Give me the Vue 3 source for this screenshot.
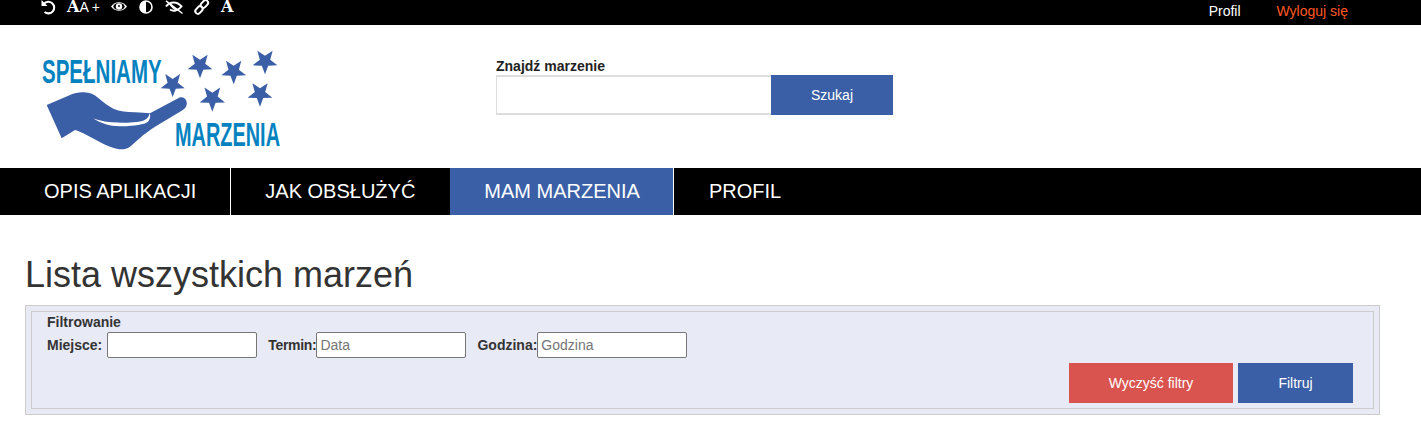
<script setup>
const menu = [
  { label: 'OPIS APLIKACJI' },
  { label: 'JAK OBSŁUŻYĆ' },
  { label: 'MAM MARZENIA', active: true },
  { label: 'PROFIL' },
]

const stars = [
  [458, 133, 38],
  [540, 76, 39],
  [641, 94, 39],
  [735, 64, 39],
  [577, 175, 40],
  [720, 161, 39],
]

function starPoints(cx, cy, r) {
  const pts = []
  for (let i = 0; i < 10; i++) {
    const radius = i % 2 === 0 ? r : r * 0.42
    const angle = Math.PI / 2 + (i * Math.PI) / 5
    pts.push(`${(cx + radius * Math.cos(angle)).toFixed(1)},${(cy + radius * Math.sin(angle)).toFixed(1)}`)
  }
  return pts.join(' ')
}
</script>

<template>
  <div class="page">
    <div class="topbar">
      <div class="tools">
        <svg class="ico" width="14" height="14" viewBox="0 0 14 14" fill="none" stroke="#fff" stroke-width="2.1">
          <path d="M3 3.8 A5.8 5.8 0 1 1 3.6 12" />
          <path d="M.5 0 L.5 6 L6.5 6 Z" fill="#fff" stroke="none" />
        </svg>
        <span class="sizes"><b class="serif">A</b><span class="thin">A</span><span class="plus">+</span></span>
        <svg class="ico" width="16" height="14" viewBox="0 0 17 14">
          <path d="M0 6.5 C4 .5 13 .5 17 6.5 C13 12.5 4 12.5 0 6.5 Z" fill="#fff" />
          <ellipse cx="8.5" cy="6.5" rx="6" ry="3.8" fill="#000" />
          <circle cx="8.5" cy="6.5" r="3.4" fill="#fff" />
          <circle cx="8.5" cy="6" r="1" fill="#000" />
        </svg>
        <svg class="ico" width="14" height="14" viewBox="0 0 14 14">
          <circle cx="7" cy="7" r="6" fill="#000" stroke="#fff" stroke-width="1.6" />
          <path d="M7 1 A6 6 0 0 0 7 13 Z" fill="#fff" />
        </svg>
        <svg class="ico" width="18" height="14" viewBox="0 0 18 14" fill="none" stroke="#fff">
          <path d="M1 6.5 C5 1 12 1 16.5 6.5 C13 11 8 11.5 5 9.5" stroke-width="2" />
          <path d="M5 4 C7 6 9 9 11.5 9.5" stroke-width="2.2" />
          <path d="M1 .8 L17.5 13.5" stroke-width="1.5" />
        </svg>
        <svg class="ico link" width="14" height="14" viewBox="0 0 14 14" fill="none" stroke="#fff" stroke-width="2">
          <rect x="6.8" y="-.2" width="5.2" height="8.4" rx="2.6" transform="rotate(42 9.4 4)" />
          <rect x="1.4" y="5.8" width="5.2" height="8.4" rx="2.6" transform="rotate(42 4 10)" />
        </svg>
        <b class="serif">A</b>
      </div>
      <div class="account">
        <a class="profile">Profil</a>
        <a class="logout">Wyloguj się</a>
      </div>
    </div>

    <header class="header">
      <svg class="logo" width="280" height="120" viewBox="0 0 840 360">
        <polygon v-for="(s, i) in stars" :key="i" :points="starPoints(s[0], s[1], s[2])" fill="#3b5fa6" />
        <path
          d="M80 195 L145 167 C165 158 180 156 192 157 C210 158 222 163 235 174 C250 187 262 197 280 206 C300 214 320 216 345 217 C362 218 378 219 390 220 L480 172 C490 170 498 176 500 186 C502 200 494 208 480 215 L405 260 C390 270 380 277 370 285 L330 320 C318 328 305 329 290 326 C275 322 262 318 245 309 L190 280 C180 275 172 272 165 270 L125 295 Z"
          fill="#3b5fa6"
        />
        <path
          d="M220 235 C240 243 262 248 310 248 C340 248 362 246 374 240 C384 235 388 228 388 220 C392 226 392 236 384 245 C372 254 345 257 305 259 C270 260 240 249 220 235 Z"
          fill="#fff"
        />
        <text x="66" y="130" class="logo-text" textLength="359" lengthAdjust="spacingAndGlyphs">SPEŁNIAMY</text>
        <text x="465" y="318" class="logo-text" textLength="315" lengthAdjust="spacingAndGlyphs">MARZENIA</text>
      </svg>
      <div class="search">
        <label class="search-label">Znajdź marzenie</label>
        <div class="search-row">
          <input class="search-input" type="text" />
          <button class="search-btn">Szukaj</button>
        </div>
      </div>
    </header>

    <nav class="nav">
      <a v-for="item in menu" :key="item.label" class="nav-item" :class="{ active: item.active }">{{ item.label }}</a>
    </nav>

    <main class="content">
      <h1>Lista wszystkich marzeń</h1>
      <div class="filter-box">
        <fieldset class="filter">
          <div class="filter-title">Filtrowanie</div>
          <div class="fields">
            <label class="gap-m">Miejsce:</label>
            <input type="text" />
            <label class="gap-t tight">Termin:</label>
            <input type="text" placeholder="Data" />
            <label class="gap-t">Godzina:</label>
            <input type="text" placeholder="Godzina" />
          </div>
          <div class="actions">
            <button class="btn clear">Wyczyść filtry</button>
            <button class="btn apply">Filtruj</button>
          </div>
        </fieldset>
      </div>
    </main>
  </div>
</template>

<style>
html,
body {
  margin: 0;
  background: #fff;
  overflow: hidden;
}
</style>

<style scoped>
.page {
  font-family: "Liberation Sans", Arial, sans-serif;
  color: #333;
}

.topbar {
  height: 25px;
  background: #000;
  color: #fff;
  display: flex;
  justify-content: space-between;
}

.tools {
  display: flex;
  align-items: flex-start;
  gap: 12px;
  padding-left: 41px;
}

.ico {
  display: block;
  overflow: visible;
}

.serif {
  font-family: "DejaVu Serif", serif;
  font-weight: 700;
  font-size: 16px;
  line-height: 14px;
}

.sizes {
  display: flex;
  width: 32px;
  line-height: 14px;
}

.thin {
  font-size: 14px;
}

.plus {
  font-size: 14px;
  margin-left: 3px;
}

.account {
  display: flex;
  gap: 36px;
  padding: 3px 73px 0 0;
  font-size: 14px;
  line-height: 16px;
}

.logout {
  color: #ff5722;
}

.header {
  height: 143px;
  display: flex;
  box-sizing: border-box;
  padding: 15px 0 0 20px;
  gap: 196px;
}

.logo {
  display: block;
  overflow: visible;
}

.logo-text {
  font-family: "Liberation Sans", sans-serif;
  font-weight: 700;
  font-size: 98px;
  fill: #0582c0;
}

.search {
  padding-top: 17px;
}

.search-label {
  display: block;
  font-size: 14px;
  font-weight: 700;
  line-height: 18px;
  color: #222;
}

.search-row {
  display: flex;
}

.search-input {
  box-sizing: border-box;
  width: 275px;
  height: 40px;
  border: 1px solid #ddd;
  border-width: 2px 0 2px 1px;
  outline: none;
}

.search-btn {
  width: 122px;
  height: 40px;
  border: 0;
  background: #3b5fa6;
  color: #fff;
  font: 14px "Liberation Sans", sans-serif;
}

.nav {
  height: 47px;
  background: #000;
  display: flex;
  padding-left: 10px;
}

.nav-item {
  padding: 0 34px;
  font-size: 20px;
  line-height: 47px;
  color: #fff;
  border-right: 1px solid #fff;
}

.nav-item:nth-child(2) {
  border-right-color: #000;
}

.nav-item:last-child {
  border-right: 0;
  padding-left: 35px;
}

.nav-item.active {
  background: #3b5fa6;
  padding-right: 33px;
}

.content {
  padding: 0 41px 0 25px;
}

h1 {
  margin: 0;
  padding-top: 39px;
  font-size: 36px;
  font-weight: 400;
  line-height: 41px;
  height: 51px;
}

.filter-box {
  box-sizing: border-box;
  height: 110px;
  padding: 5px;
  background: #e8eaf6;
  border: 1px solid #ccc;
}

.filter {
  box-sizing: border-box;
  height: 98px;
  margin: 0;
  padding: 3px 20px 0 15px;
  border: 1px solid #ccc;
  min-width: 0;
}

.filter-title {
  font-size: 14px;
  font-weight: 700;
  line-height: 14px;
  padding-bottom: 3px;
}

.fields {
  display: flex;
  align-items: center;
  font-size: 14px;
  font-weight: 700;
}

.fields input {
  box-sizing: border-box;
  width: 150px;
  height: 26px;
  padding: 1px 3px;
  border: 1px solid #767676;
  border-radius: 2px;
  background: #fff;
  font: 14px "Liberation Sans", sans-serif;
  outline: none;
}

.fields input::placeholder {
  color: #757575;
}

.gap-m {
  margin-right: 5px;
}

.gap-t {
  margin-left: 11px;
}

.tight {
  letter-spacing: -0.3px;
}

.actions {
  display: flex;
  justify-content: flex-end;
  gap: 5px;
  margin-top: 5px;
}

.btn {
  height: 40px;
  border: 0;
  color: #fff;
  font: 14px "Liberation Sans", sans-serif;
}

.clear {
  width: 164px;
  background: #d9534f;
}

.apply {
  width: 115px;
  background: #3b5fa6;
}
</style>
